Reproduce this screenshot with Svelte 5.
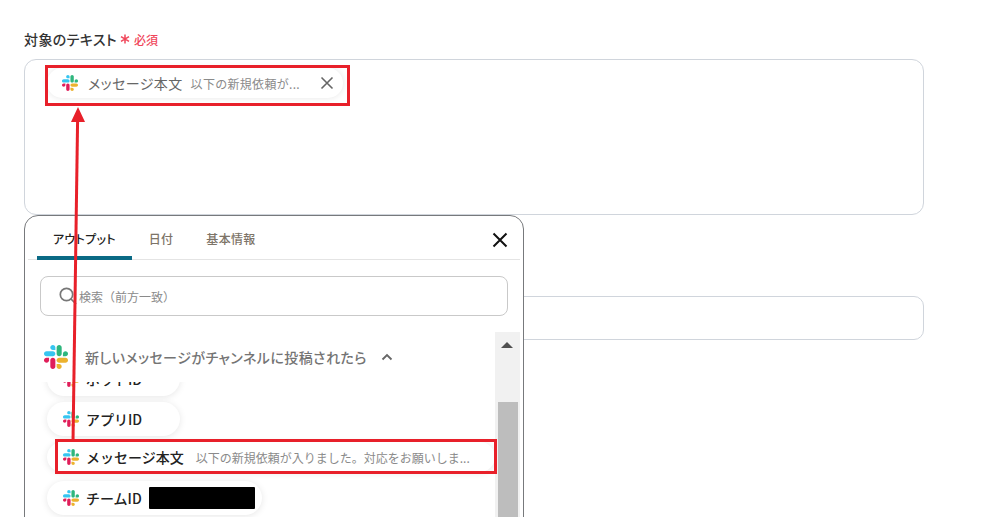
<script>
	const tabs = ['アウトプット', '日付', '基本情報'];
</script>

{#snippet slack(size)}
	<svg class="slack" width={size} height={size} viewBox="0 0 122.8 122.8" aria-hidden="true">
		<path d="M25.8 77.6c0 7.1-5.8 12.9-12.9 12.9S0 84.7 0 77.6s5.8-12.9 12.9-12.9h12.9v12.9z" fill="#e01e5a" />
		<path d="M32.3 77.6c0-7.1 5.8-12.9 12.9-12.9s12.9 5.8 12.9 12.9v32.3c0 7.1-5.8 12.9-12.9 12.9s-12.9-5.8-12.9-12.9V77.6z" fill="#e01e5a" />
		<path d="M45.2 25.8c-7.1 0-12.9-5.8-12.9-12.9S38.1 0 45.2 0s12.9 5.8 12.9 12.9v12.9H45.2z" fill="#36c5f0" />
		<path d="M45.2 32.3c7.1 0 12.9 5.8 12.9 12.9s-5.8 12.9-12.9 12.9H12.9C5.8 58.1 0 52.3 0 45.2s5.8-12.9 12.9-12.9h32.3z" fill="#36c5f0" />
		<path d="M97 45.2c0-7.1 5.8-12.9 12.9-12.9s12.9 5.8 12.9 12.9-5.8 12.9-12.9 12.9H97V45.2z" fill="#2eb67d" />
		<path d="M90.5 45.2c0 7.1-5.8 12.9-12.9 12.9s-12.9-5.8-12.9-12.9V12.9C64.7 5.8 70.5 0 77.6 0s12.9 5.8 12.9 12.9v32.3z" fill="#2eb67d" />
		<path d="M77.6 97c7.1 0 12.9 5.8 12.9 12.9s-5.8 12.9-12.9 12.9-12.9-5.8-12.9-12.9V97h12.9z" fill="#ecb22e" />
		<path d="M77.6 90.5c-7.1 0-12.9-5.8-12.9-12.9s5.8-12.9 12.9-12.9h32.3c7.1 0 12.9 5.8 12.9 12.9s-5.8 12.9-12.9 12.9H77.6z" fill="#ecb22e" />
	</svg>
{/snippet}

<div class="page">
	<div class="label">
		<span>対象のテキスト</span>
		<svg class="star" width="10" height="10" viewBox="0 0 10 10" aria-hidden="true">
			<path d="M5 .5v9M1 2.6l8 4.8M9 2.6L1 7.4" />
		</svg>
		<span class="required">必須</span>
	</div>
	<div class="textarea">
		<div class="tag">
			{@render slack(16)}
			<span class="tag-name">メッセージ本文</span>
			<span class="tag-value">以下の新規依頼が...</span>
			<svg class="tag-close" width="14" height="14" viewBox="0 0 14 14" aria-hidden="true">
				<path d="M1.5 1.5l11 11M12.5 1.5l-11 11" />
			</svg>
		</div>
	</div>
	<div class="input"></div>

	<div class="panel">
		<div class="tabs">
			{#each tabs as tab, i}
				<div class="tab" class:active={i === 0}>{tab}</div>
			{/each}
			<svg class="panel-close" width="16" height="16" viewBox="0 0 16 16" aria-hidden="true">
				<path d="M1.5 1.5l13 13M14.5 1.5l-13 13" />
			</svg>
		</div>

		<div class="search">
			<svg width="20" height="20" viewBox="0 0 20 20" aria-hidden="true">
				<circle cx="8.5" cy="8.5" r="6.2" />
				<path d="M13 13l5 5" />
			</svg>
			<span>検索（前方一致）</span>
		</div>

		<div class="body">
			<div class="content">
				<div class="section">
					{@render slack(24)}
					<span>新しいメッセージがチャンネルに投稿されたら</span>
					<svg class="chevron" width="12" height="8" viewBox="0 0 12 8" aria-hidden="true">
						<path d="M1.5 6.5L6 2l4.5 4.5" />
					</svg>
				</div>
				<div class="list">
					<div class="item clipped">{@render slack(16)}<b>ボットID</b></div>
					<div class="item">{@render slack(16)}<b>アプリID</b></div>
					<div class="item wide">
						{@render slack(16)}<b>メッセージ本文</b>
						<span class="value">以下の新規依頼が入りました。対応をお願いしま...</span>
					</div>
					<div class="item team">{@render slack(16)}<b>チームID</b><span class="redact"></span></div>
				</div>
			</div>
			<div class="scrollbar">
				<div class="scroll-up"></div>
				<div class="thumb"></div>
			</div>
		</div>
	</div>

	<!-- annotations drawn over the screenshot -->
	<div class="mark mark-top"></div>
	<div class="mark mark-bottom"></div>
	<svg class="arrow" width="997" height="517" viewBox="0 0 997 517" aria-hidden="true">
		<path d="M73 442L77.6 120" />
		<polygon points="78,107 71,122 85,122" />
	</svg>
</div>

<style>
	:global(body) {
		margin: 0;
		background: #fff;
		font-family: 'Noto Sans CJK JP', 'Noto Sans', sans-serif;
	}

	.page {
		position: relative;
		width: 997px;
		height: 517px;
		box-sizing: border-box;
		padding: 29px 73px 0 24px;
		overflow: hidden;
		color: #2f2f2f;
	}

	.label {
		display: flex;
		align-items: center;
		height: 20px;
		font-size: 14px;
		font-weight: 500;
		font-feature-settings: 'palt';
		letter-spacing: 0.4px;
		color: #333;
	}

	.star {
		margin-left: 3px;
	}

	.star path {
		fill: none;
		stroke: #f0465a;
		stroke-width: 1.5;
	}

	.required {
		margin-left: 4px;
		color: #f0465a;
		font-size: 12px;
		letter-spacing: 0;
		font-feature-settings: normal;
	}

	.textarea {
		box-sizing: border-box;
		height: 156px;
		margin-top: 10px;
		padding: 8px 0 0 22px;
		border: 1px solid #d0d5dc;
		border-radius: 12px;
	}

	.tag {
		display: flex;
		align-items: center;
		width: 296px;
		height: 30px;
		box-sizing: border-box;
		padding: 0 9px 0 15px;
		border-radius: 15px;
		background: #fff;
		box-shadow: 0 0 6px rgba(0, 0, 0, 0.1);
	}

	.tag-name {
		margin-left: 10px;
		font-size: 14px;
		font-feature-settings: 'palt';
		letter-spacing: 0.4px;
		color: #666;
	}

	.tag-value {
		margin-left: 8px;
		font-size: 12px;
		letter-spacing: 0.3px;
		color: #8a8a8a;
	}

	.tag-close {
		margin-left: auto;
	}

	.tag-close path {
		fill: none;
		stroke: #666;
		stroke-width: 1.6;
	}

	.input {
		box-sizing: border-box;
		height: 44px;
		margin-top: 81px;
		border: 1px solid #d0d5dc;
		border-radius: 10px;
	}

	.panel {
		position: absolute;
		left: 24px;
		top: 215px;
		box-sizing: border-box;
		width: 500px;
		height: 330px;
		border: 1px solid #77797c;
		border-radius: 14px;
		background: #fff;
		overflow: hidden;
	}

	.tabs {
		display: flex;
		position: relative;
		box-sizing: border-box;
		height: 44px;
		margin: 0 3px 0 3px;
		padding-left: 9px;
		border-bottom: 1px solid #e4e4e4;
	}

	.tab {
		box-sizing: border-box;
		height: 44px;
		padding: 14px 16px 0;
		font-size: 12px;
		font-weight: 500;
		line-height: 18px;
		font-feature-settings: 'palt';
		letter-spacing: 0.3px;
		color: #7d7468;
		margin-right: 1px;
	}

	.tab.active {
		color: #222;
		border-bottom: 4px solid #0a6a85;
		border-radius: 3px 3px 0 0;
	}

	.panel-close {
		position: absolute;
		right: 12px;
		top: 16px;
	}

	.panel-close path {
		fill: none;
		stroke: #111;
		stroke-width: 2;
	}

	.search {
		display: flex;
		align-items: center;
		box-sizing: border-box;
		height: 40px;
		margin: 16px 15px 0 15px;
		padding-left: 17px;
		border: 1px solid #c9c9c9;
		border-radius: 8px;
		font-size: 12px;
		color: #8a8a8a;
	}

	.search svg {
		margin-right: 1px;
	}

	.search circle,
	.search path {
		fill: none;
		stroke: #777;
		stroke-width: 1.7;
	}

	.body {
		display: flex;
		height: 230px;
		margin-top: 16px;
	}

	.content {
		flex: 1;
		min-width: 0;
	}

	.section {
		display: flex;
		align-items: center;
		height: 50px;
		padding-left: 19px;
		font-size: 14px;
		font-weight: 500;
		font-feature-settings: 'palt';
		letter-spacing: 0.43px;
		color: #747474;
	}

	.section span {
		margin-left: 17px;
	}

	.chevron {
		margin-left: 14px;
	}

	.chevron path {
		fill: none;
		stroke: #666;
		stroke-width: 1.8;
	}

	.list {
		height: 180px;
		padding: 0 0 0 22px;
		overflow: hidden;
	}

	.item {
		display: flex;
		align-items: center;
		box-sizing: border-box;
		width: fit-content;
		height: 34px;
		min-width: 133px;
		margin: 6px 0;
		padding: 0 20px 0 16px;
		border-radius: 17px;
		background: #fff;
		box-shadow: 0 1px 7px rgba(0, 0, 0, 0.1);
		font-size: 14px;
		color: #222;
	}

	.item b {
		margin-left: 7px;
		font-weight: 500;
	}

	.item.clipped {
		margin-top: -20px;
	}

	.item.wide {
		width: 448px;
		height: 30px;
		margin-top: 5px;
		margin-bottom: 9px;
	}

	.item.team {
		padding-right: 7px;
	}

	.value {
		margin-left: 12px;
		font-size: 12px;
		color: #8a8a8a;
		white-space: nowrap;
	}

	.redact {
		width: 106px;
		height: 22px;
		margin-left: 7px;
		background: #000;
		border-radius: 1px;
	}

	.scrollbar {
		flex: none;
		width: 25px;
		margin-right: 3px;
		background: #f1f1f1;
		position: relative;
	}

	.scroll-up {
		position: absolute;
		left: 6px;
		top: 10px;
		border-left: 6px solid transparent;
		border-right: 6px solid transparent;
		border-bottom: 6px solid #505050;
	}

	.thumb {
		position: absolute;
		left: 3px;
		right: 2px;
		top: 70px;
		bottom: 0;
		background: #bdbdbd;
	}

	.mark {
		position: absolute;
		box-sizing: border-box;
		border: 3px solid #e8202a;
	}

	.mark-top {
		left: 45px;
		top: 65px;
		width: 305px;
		height: 41px;
	}

	.mark-bottom {
		left: 55px;
		top: 439px;
		width: 442px;
		height: 35px;
	}

	.arrow {
		position: absolute;
		left: 0;
		top: 0;
	}

	.arrow path {
		fill: none;
		stroke: #e8202a;
		stroke-width: 3;
	}

	.arrow polygon {
		fill: #e8202a;
	}
</style>
